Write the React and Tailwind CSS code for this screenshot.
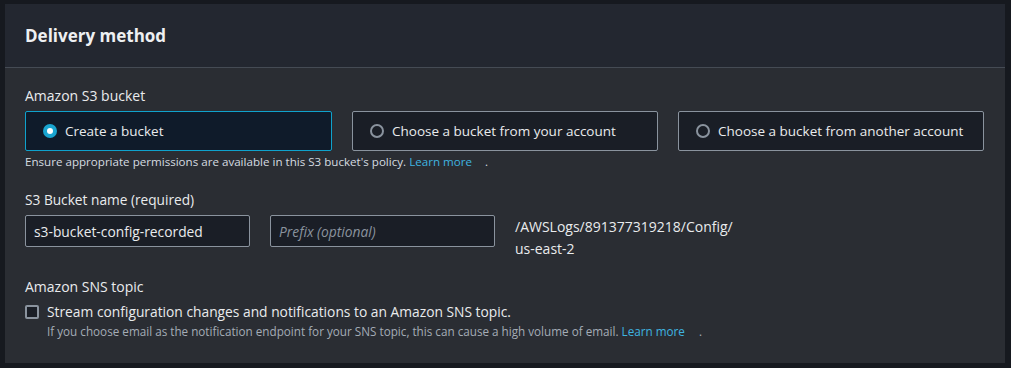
import { useState } from 'react';

const font = { fontFamily: '"Open Sans", "Noto Sans", Arial, sans-serif' };

function RadioTile({ label, checked, onSelect }) {
  return (
    <button
      onClick={onSelect}
      className={
        checked
          ? 'flex items-center h-[40px] w-[307px] pl-[17px] gap-[8px] border border-[#0fa2cc] bg-[#0f1b2a] rounded-[2px] text-left'
          : 'flex items-center h-[40px] w-[306px] pl-[17px] gap-[8px] border border-[#8a939e] bg-[#1a1e26] rounded-[2px] text-left'
      }
    >
      {checked ? (
        <span className="w-[14px] h-[14px] rounded-full bg-[#19a5d0] flex items-center justify-center">
          <span className="w-[6px] h-[6px] rounded-full bg-white" />
        </span>
      ) : (
        <span className="w-[14px] h-[14px] rounded-full border-2 border-[#8a939e]" />
      )}
      <span className="text-[13.5px] text-[#e9ebed]">{label}</span>
    </button>
  );
}

export default function App() {
  const [choice, setChoice] = useState('create');
  const [sns, setSns] = useState(false);

  return (
    <div className="w-[1011px] h-[368px] bg-[#16191f] pt-[4px] pl-[5px]" style={font}>
      <div className="w-[1000px] h-[359px] bg-[#2a2d33] flex flex-col">
        <div className="h-[64px] bg-[#232730] border-b border-[#454b54] flex items-center px-[20px]">
          <h2 className="text-[17px] font-bold text-[#eef0f2] pt-[1px]">Delivery method</h2>
        </div>

        <div className="px-[20px] pt-[18px]">
          <div className="text-[14px] text-[#e9ebed] leading-[20px]">Amazon S3 bucket</div>
          <div className="flex gap-[20px] mt-[5px]">
            <RadioTile label="Create a bucket" checked={choice === 'create'} onSelect={() => setChoice('create')} />
            <RadioTile label="Choose a bucket from your account" checked={choice === 'yours'} onSelect={() => setChoice('yours')} />
            <RadioTile label="Choose a bucket from another account" checked={choice === 'other'} onSelect={() => setChoice('other')} />
          </div>
          <p className="text-[11.6px] text-[#d5dbe0] leading-[16px] mt-[3px]">
            Ensure appropriate permissions are available in this S3 bucket's policy.{' '}
            <a className="text-[#3fb4e0]">Learn more</a>
            <span className="ml-[13px]">.</span>
          </p>

          <div className="text-[13.7px] text-[#e9ebed] leading-[20px] mt-[20px]">S3 Bucket name (required)</div>
          <div className="flex items-start gap-[20px] mt-[5px]">
            <input
              defaultValue="s3-bucket-config-recorded"
              className="w-[225px] h-[32px] px-[8px] bg-[#1a1e26] border border-[#8a939e] rounded-[2px] text-[13.8px] text-[#e9ebed] outline-none"
            />
            <input
              placeholder="Prefix (optional)"
              className="w-[225px] h-[32px] px-[8px] bg-[#1a1e26] border border-[#8a939e] rounded-[2px] text-[13.8px] text-[#e9ebed] placeholder:text-[#8a939e] placeholder:italic outline-none"
            />
            <div className="text-[14px] text-[#e9ebed] leading-[22px] pt-[1px]">
              /AWSLogs/891377319218/Config/
              <br />
              us-east-2
            </div>
          </div>

          <div className="text-[14px] text-[#e9ebed] leading-[20px] mt-[17px]">Amazon SNS topic</div>
          <label className="flex items-start gap-[8px] mt-[5px]">
            <input type="checkbox" checked={sns} onChange={() => setSns(!sns)} className="sr-only" />
            <span className="w-[14px] h-[14px] mt-[3px] border-2 border-[#8a939e] rounded-[2px] bg-[#1a1e26] shrink-0" />
            <span className="flex flex-col">
              <span className="text-[13.8px] text-[#e9ebed] leading-[20px]">
                Stream configuration changes and notifications to an Amazon SNS topic.
              </span>
              <span className="text-[11.7px] text-[#a4acb6] leading-[19px]">
                If you choose email as the notification endpoint for your SNS topic, this can cause a high volume of email.{' '}
                <a className="text-[#3fb4e0]">Learn more</a>
                <span className="ml-[14px]">.</span>
              </span>
            </span>
          </label>
        </div>
      </div>
    </div>
  );
}
